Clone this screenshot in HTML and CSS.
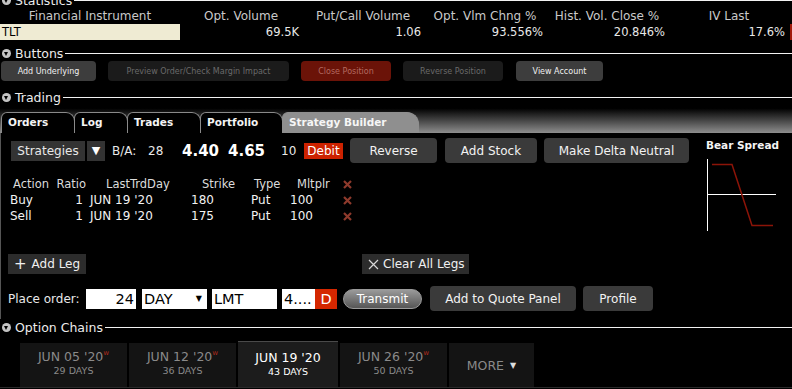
FILE: index.html
```html
<!DOCTYPE html>
<html lang="en">
<head>
  <meta charset="UTF-8" />
  <title>Strategy Builder</title>
  <link rel="stylesheet" href="styles.css">
</head>
<body>

  <div class="section-head first">
    <span class="toggle"></span>
    <span class="section-title">Statistics</span>
    <span class="rule"></span>
  </div>

  <div class="stats">
    <div class="stats-head">Financial Instrument</div>
    <div class="stats-head">Opt. Volume</div>
    <div class="stats-head">Put/Call Volume</div>
    <div class="stats-head">Opt. Vlm Chng %</div>
    <div class="stats-head">Hist. Vol. Close %</div>
    <div class="stats-head">IV Last</div>
    <div class="stats-val symbol">TLT</div>
    <div class="stats-val">69.5K</div>
    <div class="stats-val">1.06</div>
    <div class="stats-val">93.556%</div>
    <div class="stats-val">20.846%</div>
    <div class="stats-val last">17.6%</div>
  </div>

  <div class="section-head">
    <span class="toggle"></span>
    <span class="section-title">Buttons</span>
    <span class="rule"></span>
  </div>

  <div class="button-row">
    <span class="small-btn btn-add">Add Underlying</span>
    <span class="small-btn off btn-preview">Preview Order/Check Margin Impact</span>
    <span class="small-btn danger btn-close">Close Position</span>
    <span class="small-btn off btn-reverse">Reverse Position</span>
    <span class="small-btn btn-account">View Account</span>
  </div>

  <div class="section-head trading">
    <span class="toggle"></span>
    <span class="section-title">Trading</span>
    <span class="rule"></span>
  </div>

  <div class="tab-strip">
    <span class="tab t-orders">Orders</span>
    <span class="tab t-log">Log</span>
    <span class="tab t-trades">Trades</span>
    <span class="tab t-portfolio">Portfolio</span>
    <span class="tab active t-builder">Strategy Builder</span>
  </div>

  <div class="builder">
    <div class="builder-main">
      <div class="strategy-row">
        <span class="select-box">Strategies</span>
        <span class="select-arrow">&#9660;</span>
        <span class="ba-label">B/A:</span>
        <span class="ba-size">28</span>
        <span class="ba-price">4.40</span>
        <span class="ba-price">4.65</span>
        <span class="ba-size ask-size">10</span>
        <span class="debit">Debit</span>
        <span class="big-btn w-reverse">Reverse</span>
        <span class="big-btn w-stock">Add Stock</span>
        <span class="big-btn w-delta">Make Delta Neutral</span>
      </div>

      <div class="legs">
        <span class="lh c-action">Action</span>
        <span class="lh c-ratio">Ratio</span>
        <span class="lh c-day">LastTrdDay</span>
        <span class="lh c-strike">Strike</span>
        <span class="lh c-type">Type</span>
        <span class="lh c-mult">Mltplr</span>
        <span class="del"><svg width="9" height="9" viewBox="0 0 9 9"><path d="M1 1L8 8M8 1L1 8" /></svg></span>

        <span class="lc">Buy</span>
        <span class="lc num">1</span>
        <span class="lc day">JUN 19 '20</span>
        <span class="lc strike">180</span>
        <span class="lc type">Put</span>
        <span class="lc mult">100</span>
        <span class="del"><svg width="9" height="9" viewBox="0 0 9 9"><path d="M1 1L8 8M8 1L1 8" /></svg></span>

        <span class="lc">Sell</span>
        <span class="lc num">1</span>
        <span class="lc day">JUN 19 '20</span>
        <span class="lc strike">175</span>
        <span class="lc type">Put</span>
        <span class="lc mult">100</span>
        <span class="del"><svg width="9" height="9" viewBox="0 0 9 9"><path d="M1 1L8 8M8 1L1 8" /></svg></span>
      </div>

      <div class="leg-actions">
        <span class="flat-btn add-leg"><span class="plus">+</span><span>Add Leg</span></span>
        <span class="flat-btn clear-legs">
          <svg class="cross" width="11" height="11" viewBox="0 0 11 11"><path d="M1 1L10 10M10 1L1 10" /></svg>
          <span>Clear All Legs</span>
        </span>
      </div>

      <div class="order-row">
        <span class="order-label">Place order:</span>
        <span class="field qty">24</span>
        <span class="field tif">DAY <span class="caret">&#9660;</span></span>
        <span class="field type">LMT</span>
        <span class="field price">4....</span><span class="field-d">D</span>
        <span class="transmit">Transmit</span>
        <span class="big-btn w-quote">Add to Quote Panel</span>
        <span class="big-btn w-profile">Profile</span>
      </div>
    </div>

    <div class="payoff">
      <div class="payoff-title">Bear Spread</div>
      <svg width="72" height="74" viewBox="0 0 72 74">
        <path d="M1.5 0V72" stroke="#fff" stroke-width="1" fill="none" />
        <path d="M1 35.5H70" stroke="#fff" stroke-width="1" fill="none" />
        <path d="M6 5.5H26L46 66.5H67" stroke="#8c1408" stroke-width="1.5" fill="none" />
      </svg>
    </div>
  </div>

  <div class="section-head chains">
    <span class="toggle"></span>
    <span class="section-title">Option Chains</span>
    <span class="rule"></span>
  </div>

  <div class="expiries">
    <div class="expiry">
      <span class="exp-date">JUN 05 '20<sup>w</sup></span>
      <span class="exp-days">29 DAYS</span>
    </div>
    <div class="expiry">
      <span class="exp-date">JUN 12 '20<sup>w</sup></span>
      <span class="exp-days">36 DAYS</span>
    </div>
    <div class="expiry current">
      <span class="exp-date">JUN 19 '20</span>
      <span class="exp-days">43 DAYS</span>
    </div>
    <div class="expiry">
      <span class="exp-date">JUN 26 '20<sup>w</sup></span>
      <span class="exp-days">50 DAYS</span>
    </div>
    <div class="expiry more">MORE <span class="more-caret">&#9660;</span></div>
  </div>

</body>
</html>
```

FILE: styles.css
```css
* {
  box-sizing: border-box;
}

body {
  margin: 0;
  width: 792px;
  height: 389px;
  overflow: hidden;
  background-color: #000;
  color: #e8e8e8;
  font-family: 'DejaVu Sans', sans-serif;
  font-size: 12px;
}

/* section headers */

.section-head {
  display: flex;
  align-items: center;
  height: 14px;
  margin-top: 6px;
}

.section-head.first {
  margin-top: -7px;
}

.section-head.trading {
  margin-top: 9px;
}

.section-head.chains {
  margin-top: 1px;
}

.toggle {
  width: 9px;
  height: 9px;
  margin: 0 4px 0 2px;
  border-radius: 50%;
  background: #c4c4c4;
  position: relative;
}

.toggle::after {
  content: '';
  position: absolute;
  left: 2px;
  top: 3px;
  border-left: 2.5px solid transparent;
  border-right: 2.5px solid transparent;
  border-top: 4px solid #000;
}

.section-title {
  font-size: 12.5px;
  color: #ececec;
  padding-right: 2px;
}

.rule {
  flex: 1;
  border-top: 1px solid #f2f2f2;
}

/* statistics */

.stats {
  display: grid;
  grid-template-columns: 180px repeat(5, 122px);
  grid-template-rows: 15px 16px;
  margin-top: 2px;
}

.stats-head {
  text-align: center;
  font-size: 12px;
  color: #c9c9c9;
  line-height: 15px;
  white-space: nowrap;
}

.stats-val {
  text-align: right;
  padding-right: 3px;
  font-size: 11.5px;
  line-height: 16px;
}

.stats-val.symbol {
  text-align: left;
  padding-left: 2px;
  background: #efebd3;
  color: #000;
}

.stats-val.last {
  border-right: 2px solid #a11a0c;
  padding-right: 5px;
  margin-right: -2px;
}

/* buttons section */

.button-row {
  display: flex;
  margin-top: 1px;
  padding-left: 1px;
  height: 20px;
}

.small-btn {
  display: flex;
  align-items: center;
  justify-content: center;
  height: 20px;
  border-radius: 4px;
  background: #3d3d3d;
  font-size: 8px;
  color: #f0f0f0;
  margin-right: 12px;
}

.small-btn.off {
  background: #1b1b1b;
  color: #6a6a6a;
}

.small-btn.danger {
  background: #6b1308;
  color: #b36a60;
}

.btn-add { width: 95px; margin-right: 12px; }
.btn-preview { width: 181px; }
.btn-close { width: 90px; }
.btn-reverse { width: 100px; margin-right: 13px; }
.btn-account { width: 87px; }

/* trading tabs */

.tab-strip {
  display: flex;
  align-items: flex-end;
  height: 29px;
  padding-left: 1px;
  background: linear-gradient(#000 0%, #000 15%, #8e8e8e 100%);
}

.tab {
  height: 21px;
  padding-left: 6px;
  padding-top: 3px;
  border: 1px solid #8a8a8a;
  border-bottom: none;
  border-radius: 6px 9px 0 0;
  background: #000;
  font-size: 10.5px;
  font-weight: bold;
  color: #f4f4f4;
  margin-right: -1px;
}

.tab.active {
  background: #8f8f8f;
  border-color: #8f8f8f;
  color: #f6f6f6;
  border-radius: 6px 12px 0 0;
}

.t-orders { width: 74px; }
.t-log { width: 54px; }
.t-trades { width: 74px; }
.t-portfolio { width: 83px; }
.t-builder { width: 137px; }

/* strategy builder */

.builder {
  display: flex;
  height: 186px;
  border-left: 1px solid #555;
}

.builder-main {
  width: 704px;
}

.strategy-row {
  display: flex;
  align-items: center;
  height: 25px;
  margin-top: 5px;
  padding-left: 10px;
}

.select-box {
  width: 74px;
  height: 20px;
  line-height: 20px;
  text-align: center;
  background: #333;
  font-size: 12px;
}

.select-arrow {
  width: 18px;
  height: 20px;
  line-height: 20px;
  text-align: center;
  margin-left: 2px;
  background: #333;
  font-size: 11px;
  color: #fff;
}

.ba-label {
  margin-left: 7px;
  width: 36px;
  font-size: 12px;
}

.ba-size {
  width: 34px;
  font-size: 12px;
}

.ask-size {
  width: 23px;
  margin-left: 7px;
}

.ba-price {
  font-size: 15px;
  font-weight: bold;
  color: #fff;
  width: 46px;
}

.debit {
  width: 39px;
  height: 16px;
  line-height: 16px;
  text-align: center;
  background: #cc2200;
  color: #fff;
  font-size: 12px;
}

.big-btn {
  display: flex;
  align-items: center;
  justify-content: center;
  height: 25px;
  border-radius: 4px;
  background: #3a3a3a;
  font-size: 12px;
  color: #f2f2f2;
}

.w-reverse { width: 87px; margin-left: 7px; }
.w-stock { width: 92px; margin-left: 8px; }
.w-delta { width: 145px; margin-left: 7px; }

/* legs table */

.legs {
  display: grid;
  grid-template-columns: 42px 34px 99px 60px 43px 52px 15px;
  grid-auto-rows: 16px;
  margin-top: 13px;
  padding-left: 9px;
  line-height: 16px;
}

.lh {
  font-size: 11.5px;
  color: #dcdcdc;
}

.lc {
  font-size: 12px;
  color: #f2f2f2;
}

.c-action { padding-left: 3px; }
.c-ratio { text-align: right; }
.c-day { padding-left: 20px; }
.c-strike { padding-left: 17px; }
.c-type { padding-left: 9px; }
.c-mult { padding-left: 9px; }

.lc.num { text-align: right; padding-right: 3px; }
.lc.day { padding-left: 4px; }
.lc.strike { padding-left: 6px; }
.lc.type { padding-left: 6px; }
.lc.mult { padding-left: 2px; }

.del {
  display: flex;
  align-items: center;
  padding-left: 3px;
}

.del path {
  stroke: #8e3a2c;
  stroke-width: 2.2;
}

/* legs actions */

.leg-actions {
  display: flex;
  margin-top: 30px;
  padding-left: 7px;
}

.flat-btn {
  display: flex;
  align-items: center;
  gap: 5px;
  height: 20px;
  background: #2c2c2c;
  font-size: 12px;
  color: #f0f0f0;
  padding: 0 6px;
  white-space: nowrap;
}

.add-leg { width: 78px; }

.clear-legs {
  width: 107px;
  margin-left: 276px;
  padding-left: 6px;
  gap: 4px;
}

.plus {
  font-size: 15px;
}

.cross {
  flex-shrink: 0;
}

.cross path {
  stroke: #d8d8d8;
  stroke-width: 1.2;
}

/* place order */

.order-row {
  display: flex;
  align-items: center;
  height: 25px;
  margin-top: 12px;
  padding-left: 7px;
}

.order-label {
  width: 78px;
  font-size: 12px;
}

.field {
  height: 20px;
  line-height: 20px;
  background: #fff;
  color: #000;
  font-size: 14.5px;
  padding: 0 2px;
}

.qty { width: 50px; text-align: right; margin-right: 6px; }

.tif {
  width: 65px;
  display: flex;
  justify-content: space-between;
  margin-right: 5px;
}

.caret {
  font-size: 8px;
  padding-right: 3px;
}

.type { width: 65px; margin-right: 5px; }
.price { width: 33px; overflow: hidden; }

.field-d {
  width: 22px;
  height: 20px;
  line-height: 20px;
  text-align: center;
  background: #d42700;
  color: #fff;
  font-size: 14.5px;
}

.transmit {
  width: 79px;
  height: 20px;
  line-height: 18px;
  margin-left: 6px;
  text-align: center;
  border: 1px solid #9a9a9a;
  border-radius: 10px;
  background: linear-gradient(#9a9a9a, #565656);
  color: #fff;
  font-size: 12px;
}

.w-quote { width: 146px; margin-left: 8px; }
.w-profile { width: 70px; margin-left: 7px; }

/* payoff */

.payoff {
  padding-top: 6px;
  padding-left: 1px;
}

.payoff-title {
  font-size: 10.5px;
  font-weight: bold;
  color: #f4f4f4;
  height: 20px;
}

/* option chains */

.expiries {
  display: flex;
  margin-top: 8px;
  padding-left: 20px;
  height: 46px;
  align-items: flex-end;
  border-bottom: 1px solid #2a2a2a;
}

.expiry {
  display: flex;
  flex-direction: column;
  align-items: center;
  width: 107px;
  height: 44px;
  margin-right: 2px;
  padding-top: 6px;
  background: #141414;
  color: #8a8a8a;
}

.expiry.current {
  width: 100px;
  height: 46px;
  padding-top: 8px;
  background: #1c1c1c;
  border-top: 1px solid #4a4a4a;
  color: #fff;
}

.exp-date {
  font-size: 12.5px;
  line-height: 15px;
}

.exp-date sup {
  font-size: 7px;
  color: #b02a1a;
  vertical-align: 6px;
  line-height: 0;
}

.exp-days {
  font-size: 9.5px;
  line-height: 13px;
}

.expiry.more {
  width: 85px;
  flex-direction: row;
  justify-content: center;
  padding-top: 0;
  align-items: center;
  font-size: 12.5px;
  color: #8a8a8a;
}

.more-caret {
  font-size: 8px;
  color: #ddd;
  margin-left: 6px;
}
```
